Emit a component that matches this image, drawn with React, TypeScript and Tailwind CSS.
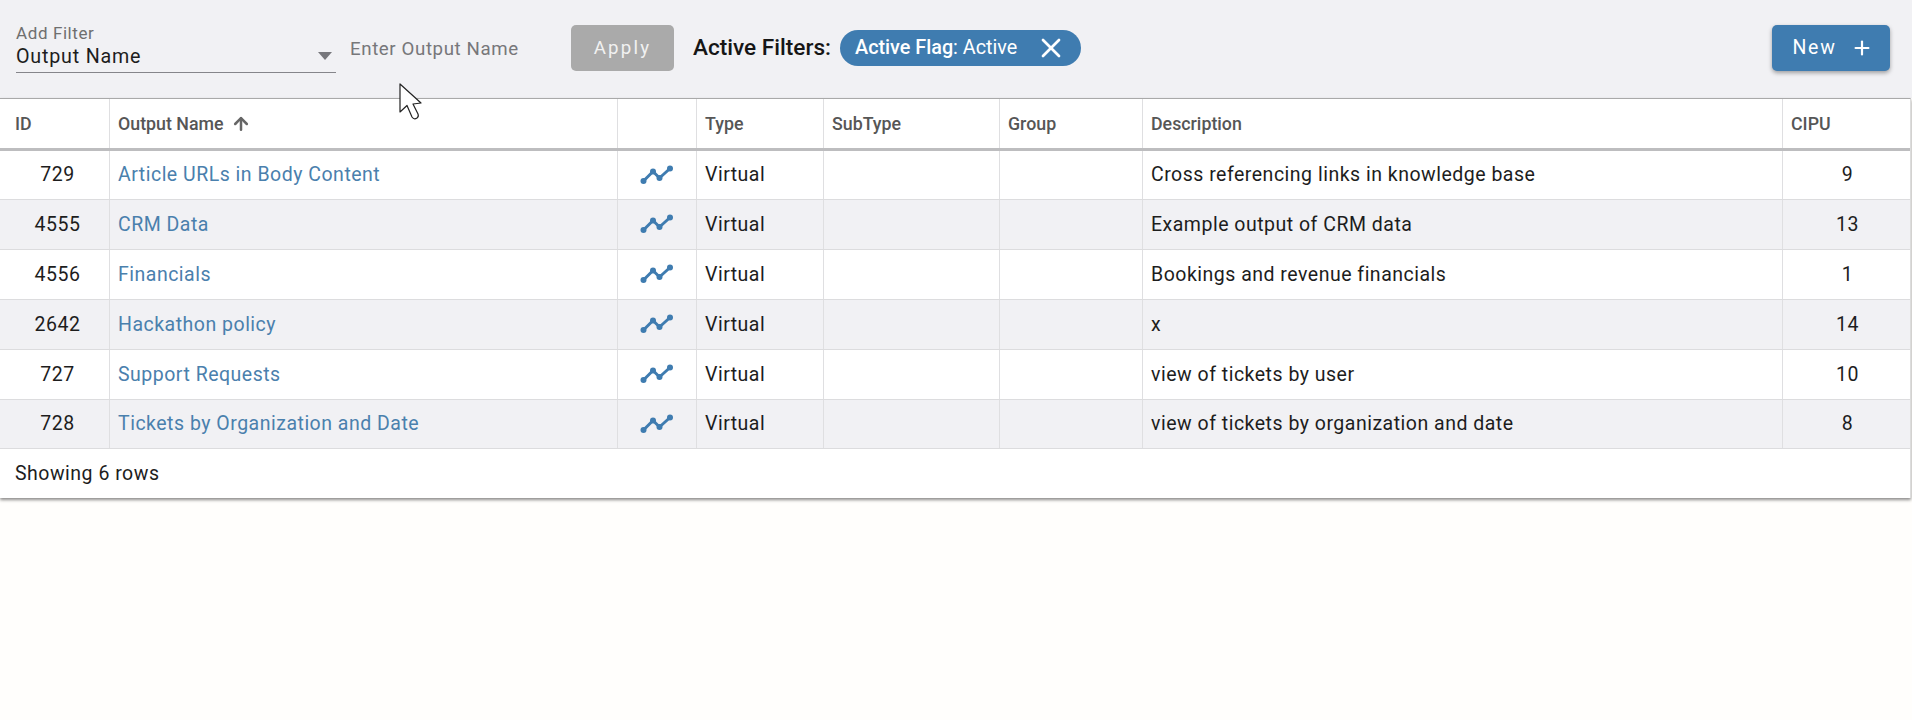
import { ArrowUp, Plus, X } from 'lucide-react'

const cols = 'grid grid-cols-[110px_508px_79px_127px_176px_143px_640px_1fr]'

const rows = [
  { id: 729, name: 'Article URLs in Body Content', desc: 'Cross referencing links in knowledge base', cipu: 9 },
  { id: 4555, name: 'CRM Data', desc: 'Example output of CRM data', cipu: 13 },
  { id: 4556, name: 'Financials', desc: 'Bookings and revenue financials', cipu: 1 },
  { id: 2642, name: 'Hackathon policy', desc: 'x', cipu: 14 },
  { id: 727, name: 'Support Requests', desc: 'view of tickets by user', cipu: 10 },
  { id: 728, name: 'Tickets by Organization and Date', desc: 'view of tickets by organization and date', cipu: 8 },
]

const headers = ['ID', 'Output Name', '', 'Type', 'SubType', 'Group', 'Description', 'CIPU']

function LineIcon() {
  return (
    <svg width="34" height="24" viewBox="0 0 34 24" className="mb-[1px] text-[#3f7cb0]">
      <path d="M3.5 18 L13 8.500 L19.500 15 L30 5.500" fill="none" stroke="currentColor" strokeWidth="3" strokeLinejoin="round" />
      <circle cx="3.5" cy="18" r="3" fill="currentColor" />
      <circle cx="13" cy="8.5" r="3" fill="currentColor" />
      <circle cx="19.5" cy="15" r="3" fill="currentColor" />
      <circle cx="30" cy="5.5" r="3" fill="currentColor" />
    </svg>
  )
}

function Cursor() {
  return (
    <svg width="24" height="38" viewBox="0 0 24 38" className="absolute left-[399px] top-[83px]">
      <path
        d="M1 1 L1 29 L8 22.5 L13 34 Q15 37 18 35 Q20 33.500 19 31 L14 21 L22 20 Z"
        fill="#fff"
        stroke="#222"
        strokeWidth="1.2"
        strokeLinejoin="round"
      />
    </svg>
  )
}

export default function App() {
  return (
    <div className="relative min-h-[720px] bg-[#fffefc] font-['Roboto',sans-serif] text-[#1d1d1d]">
      <div className="flex h-[98px] items-start bg-[#f1f1f4] pl-4 pr-[22px]">
        <div className="relative mt-[24px] h-[49px] w-[320px] border-b border-[#85858a]">
          <div className="text-[17px] leading-[18px] tracking-[0.6px] text-[#6f6f6f]">Add Filter</div>
          <div className="mt-[2px] text-[19.7px] leading-[26px] tracking-[0.8px]">Output Name</div>
          <svg width="14" height="8" viewBox="0 0 14 8" className="absolute right-[4px] top-[28px]">
            <path d="M0 0 H14 L7 8 Z" fill="#77777c" />
          </svg>
        </div>
        <div className="ml-[14px] mt-[37px] w-[221px] text-[18.7px] leading-[24px] tracking-[0.6px] text-[#77777a]">Enter Output Name</div>
        <button className="mt-[25px] h-[46px] w-[103px] rounded-[5px] bg-[#aaaaaa] pt-[1px] text-[18.700px] tracking-[2.2px] text-[#f1f1f1]">Apply</button>
        <div className="ml-[19px] mt-[35px] text-[22.6px] leading-[26px] font-medium text-[#161616]">Active Filters:</div>
        <div className="ml-[9px] mt-[30px] flex h-[36px] w-[241px] items-center rounded-full bg-[#3f7cb0] pl-[15px] text-[19.8px] text-white">
          <span className="font-medium">Active Flag</span>
          <span>: Active</span>
          <X className="ml-[18px] size-[32px]" strokeWidth={2} />
        </div>
        <button className="ml-auto mt-[25px] flex h-[46px] w-[118px] items-center justify-center gap-[14px] rounded-[5px] bg-[#3f7cb0] pl-[3px] text-[19.5px] tracking-[1.7px] text-white shadow-[0_2px_4px_rgba(0,0,0,0.35)]">
          New
          <Plus className="size-[22px]" strokeWidth={2.4} />
        </button>
      </div>

      <div className="w-[1911px] border-t border-r border-t-[#a9a9a9] border-r-[#dcdcdc] bg-white shadow-[0_2px_3px_rgba(0,0,0,0.45)]">
        <div className={`${cols} h-[52px] border-b-[3px] border-[#bdbdbf]`}>
          {headers.map((h, i) => (
            <div key={i} className="flex items-center border-r border-[#dfdfe1] px-[8px] pt-[1px] text-[17.8px] font-medium text-[#565656] first:px-[15px] last:border-r-0">
              {h}
              {h === 'Output Name' && <ArrowUp className="ml-[7px] size-[20px] text-[#666]" strokeWidth={3} />}
            </div>
          ))}
        </div>
        {rows.map((r, i) => (
          <div key={r.id} className={`${cols} ${i === 0 || i === 5 ? 'h-[49px]' : 'h-[50px]'} border-b border-[#dcdcde] text-[19.5px] tracking-[0.5px] ${i % 2 ? 'bg-[#f1f1f4]' : 'bg-white'}`}>
            <div className="flex items-center justify-center border-r border-[#dfdfe1] pl-[6px]">{r.id}</div>
            <div className="flex items-center border-r border-[#dfdfe1] px-[8px] text-[#4a80ad]">{r.name}</div>
            <div className="flex items-center justify-center border-r border-[#dfdfe1]"><LineIcon /></div>
            <div className="flex items-center border-r border-[#dfdfe1] px-[8px]">Virtual</div>
            <div className="border-r border-[#dfdfe1]" />
            <div className="border-r border-[#dfdfe1]" />
            <div className="flex items-center border-r border-[#dfdfe1] px-[8px]">{r.desc}</div>
            <div className="flex items-center justify-center pl-[2px]">{r.cipu}</div>
          </div>
        ))}
        <div className="flex h-[49px] items-center px-[15px] text-[19.5px] tracking-[0.5px]">Showing 6 rows</div>
      </div>
      <Cursor />
    </div>
  )
}
